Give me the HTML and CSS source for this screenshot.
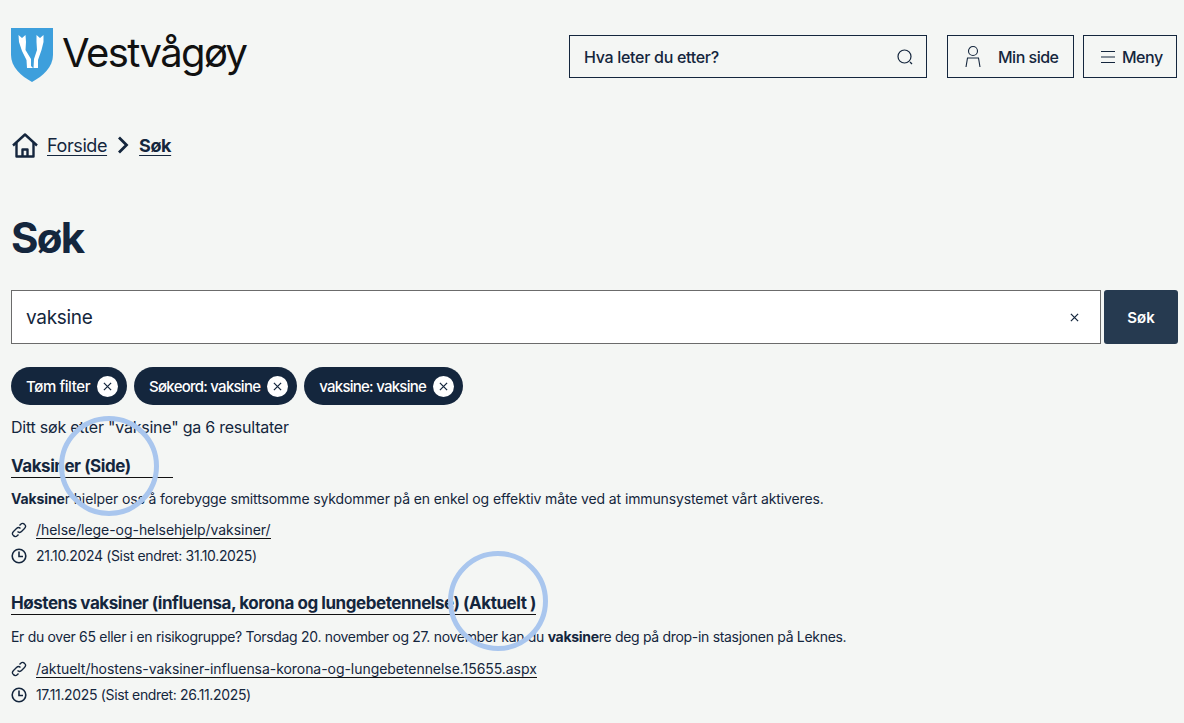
FILE: index.html
```html
<!DOCTYPE html>
<html lang="no">
<head>
  <meta charset="UTF-8">
  <meta name="viewport" content="width=device-width, initial-scale=1.0">
  <title>Søk - Vestvågøy</title>
  <link rel="stylesheet" href="styles.css">
</head>
<body>
  <header class="site-header">
    <a class="logo" href="#">
      <svg class="logo-shield" viewBox="0 0 42 54" width="42" height="54">
        <path d="M0 0H42V27C42 39 32 48 21 54C10 48 0 39 0 27Z" fill="#3d9fdc"/>
        <path d="M7.500 7L11 10L14.500 7L15 14L14.500 22L20 31L20 38L22 40L16 40L15.500 32L11 23L8 14Z" fill="#fff"/>
        <path d="M25.500 7L29 10L32.500 7L32.500 14L30.500 22L27 32L27 40L22.500 40L23 31L26 22L25.500 14Z" fill="#fff"/>
      </svg>
      <span class="logo-text">Vestvågøy</span>
    </a>
    <div class="header-tools">
      <div class="header-search">
        <span>Hva leter du etter?</span>
        <svg viewBox="0 0 18 18" width="18" height="18" fill="none" stroke="#14263d" stroke-width="1.2">
          <circle cx="8.5" cy="8.5" r="6.5"/>
          <path d="M14 14L16 16"/>
        </svg>
      </div>
      <button class="header-btn btn-minside">
        <svg viewBox="0 0 18 24" width="18" height="24" fill="none" stroke="#14263d" stroke-width="1.1">
          <circle cx="9" cy="6" r="4.5"/>
          <path d="M2 22L3.5 13H14.5L16 22"/>
        </svg>
        Min side
      </button>
      <button class="header-btn btn-meny">
        <svg viewBox="0 0 14 14" width="14" height="14" fill="none" stroke="#14263d" stroke-width="1.2">
          <path d="M0 1.5H14M0 7H14M0 12.500H14"/>
        </svg>
        Meny
      </button>
    </div>
  </header>

  <nav class="breadcrumb">
    <svg viewBox="0 0 26 25" width="26" height="25" fill="none" stroke="#14263d" stroke-width="2.4" stroke-linejoin="round">
      <path d="M1 12.500L13 1.500L25 12.500"/>
      <path d="M4.500 10V23.500H21.500V10"/>
      <path d="M10.500 23.500V16.500H15.500V23.500"/>
    </svg>
    <a href="#">Forside</a>
    <svg class="crumb-arrow" viewBox="0 0 12 18" width="12" height="18" fill="none" stroke="#14263d" stroke-width="2.800">
      <path d="M2 1.500L9.500 9L2 16.500"/>
    </svg>
    <a class="crumb-current" href="#">Søk</a>
  </nav>

  <main>
    <h1>Søk</h1>

    <form class="search-row">
      <div class="search-field">
        <span>vaksine</span>
        <svg viewBox="0 0 10 10" width="9" height="9" stroke="#14263d" stroke-width="1.4">
          <path d="M1 1L9 9M9 1L1 9"/>
        </svg>
      </div>
      <button class="search-btn" type="button">Søk</button>
    </form>

    <div class="filters">
      <span class="chip">Tøm filter <i class="chip-x"><svg viewBox="0 0 10 10" width="9" height="9" stroke="#14263d" stroke-width="1.4"><path d="M1 1L9 9M9 1L1 9"/></svg></i></span>
      <span class="chip chip-tight">Søkeord: vaksine <i class="chip-x"><svg viewBox="0 0 10 10" width="9" height="9" stroke="#14263d" stroke-width="1.4"><path d="M1 1L9 9M9 1L1 9"/></svg></i></span>
      <span class="chip chip-tight">vaksine: vaksine <i class="chip-x"><svg viewBox="0 0 10 10" width="9" height="9" stroke="#14263d" stroke-width="1.4"><path d="M1 1L9 9M9 1L1 9"/></svg></i></span>
    </div>

    <p class="result-count">Ditt søk etter "vaksine" ga 6 resultater</p>

    <article class="result first">
      <h2><a class="title-wide" href="#">Vaksiner (Side)</a></h2>
      <p class="excerpt"><b>Vaksine</b>r hjelper oss å forebygge smittsomme sykdommer på en enkel og effektiv måte ved at immunsystemet vårt aktiveres.</p>
      <div class="meta">
        <svg viewBox="0 0 16 16" width="16" height="16" fill="none" stroke="#14263d" stroke-width="1.4"><path d="M6.500 9.500C8 11 9.500 10.500 10.500 9.500L13.500 6.500C15 5 15 3.500 13.500 2.500C12.500 1 11 1 9.500 2.500L8.500 3.500"/><path d="M9.500 6.500C8 5 6.500 5.500 5.500 6.500L2.500 9.500C1 11 1 12.500 2.500 13.500C3.500 15 5 15 6.500 13.500L7.500 12.500"/></svg>
        <a href="#">/helse/lege-og-helsehjelp/vaksiner/</a>
      </div>
      <div class="meta meta-date">
        <svg viewBox="0 0 16 16" width="16" height="16" fill="none" stroke="#14263d" stroke-width="1.6"><circle cx="8" cy="8" r="6.800"/><path d="M8 3.500V8.500H12"/></svg>
        <span>21.10.2024 (Sist endret: 31.10.2025)</span>
      </div>
    </article>

    <article class="result">
      <h2><a href="#">Høstens vaksiner (influensa, korona og lungebetennelse) (Aktuelt )</a></h2>
      <p class="excerpt">Er du over 65 eller i en risikogruppe? Torsdag 20. november og 27. november kan du <b>vaksine</b>re deg på drop-in stasjonen på Leknes.</p>
      <div class="meta">
        <svg viewBox="0 0 16 16" width="16" height="16" fill="none" stroke="#14263d" stroke-width="1.4"><path d="M6.500 9.500C8 11 9.500 10.500 10.500 9.500L13.500 6.500C15 5 15 3.500 13.500 2.500C12.500 1 11 1 9.500 2.500L8.500 3.500"/><path d="M9.500 6.500C8 5 6.500 5.500 5.500 6.500L2.500 9.500C1 11 1 12.500 2.500 13.500C3.500 15 5 15 6.500 13.500L7.500 12.500"/></svg>
        <a href="#">/aktuelt/hostens-vaksiner-influensa-korona-og-lungebetennelse.15655.aspx</a>
      </div>
      <div class="meta meta-date">
        <svg viewBox="0 0 16 16" width="16" height="16" fill="none" stroke="#14263d" stroke-width="1.6"><circle cx="8" cy="8" r="6.800"/><path d="M8 3.500V8.500H12"/></svg>
        <span>17.11.2025 (Sist endret: 26.11.2025)</span>
      </div>
    </article>
  </main>

  <div class="ring ring-one"></div>
  <div class="ring ring-two"></div>
</body>
</html>
```

FILE: styles.css
```css
html {
  height: 100%;
  overflow: hidden;
}
body {
  margin: 0;
  height: 723px;
  overflow: hidden;
  position: relative;
  background-color: #f4f6f4;
  color: #14263d;
  font-family: 'Inter', 'Liberation Sans', sans-serif;
}
a {
  color: inherit;
}
button {
  font-family: inherit;
  color: inherit;
}
/* Header */
.site-header {
  display: flex;
  justify-content: space-between;
  align-items: flex-start;
  padding: 28px 7px 0 11px;
}
.logo {
  display: flex;
  align-items: center;
  gap: 9px;
  color: #111;
  text-decoration: none;
}
.logo-shield {
  display: block;
}
.logo-text {
  font-size: 40px;
  line-height: 50px;
  letter-spacing: -1.6px;
  padding-bottom: 4px;
}
.header-tools {
  display: flex;
  margin-top: 7px;
}
.header-search {
  width: 358px;
  height: 43px;
  box-sizing: border-box;
  border: 1px solid #14263d;
  display: flex;
  align-items: center;
  justify-content: space-between;
  padding: 0 12px 0 14px;
  font-size: 16px;
  font-weight: 500;
  letter-spacing: -0.3px;
}
.header-btn {
  height: 43px;
  box-sizing: border-box;
  border: 1px solid #14263d;
  background: transparent;
  display: flex;
  align-items: center;
  font-size: 16px;
  font-weight: 500;
  letter-spacing: -0.5px;
  padding: 0;
}
.btn-minside {
  width: 127px;
  margin-left: 20px;
  padding-left: 16px;
  gap: 16px;
}
.btn-meny {
  width: 94px;
  margin-left: 9px;
  padding-left: 17px;
  gap: 7px;
}
/* Breadcrumb */
.breadcrumb {
  display: flex;
  align-items: center;
  margin-top: 48px;
  padding-left: 12px;
  height: 30px;
  font-size: 18px;
  letter-spacing: -0.4px;
}
.breadcrumb a {
  margin-left: 9px;
  text-underline-offset: 3px;
}
.crumb-arrow {
  margin-left: 10px;
}
.breadcrumb .crumb-current {
  margin-left: 10px;
  font-weight: 700;
}
/* Main */
main {
  padding: 0 6px 0 11px;
}
h1 {
  margin: 51px 0 0;
  font-size: 42px;
  line-height: 54px;
  font-weight: 700;
  letter-spacing: -1.7px;
}
.search-row {
  display: flex;
  margin-top: 25px;
  gap: 3px;
}
.search-field {
  flex: 1;
  height: 54px;
  box-sizing: border-box;
  border: 1px solid #6b6b6b;
  background: #fff;
  display: flex;
  align-items: center;
  justify-content: space-between;
  padding: 0 21px 0 14px;
  font-size: 19px;
  letter-spacing: -0.3px;
}
.search-btn {
  width: 74px;
  height: 54px;
  border: none;
  border-radius: 3px;
  background-color: #263a50;
  color: #fff;
  font-size: 15px;
  font-weight: 600;
}
.filters {
  display: flex;
  gap: 7px;
  margin-top: 23px;
}
.chip {
  display: flex;
  align-items: center;
  gap: 7px;
  height: 38px;
  padding: 0 9px 0 15px;
  border-radius: 19px;
  background-color: #14263d;
  color: #fff;
  font-size: 15px;
  font-weight: 500;
  letter-spacing: -0.4px;
}
.chip-tight {
  letter-spacing: -0.75px;
}
.chip-x {
  width: 21px;
  height: 21px;
  border-radius: 50%;
  background: #fff;
  display: flex;
  align-items: center;
  justify-content: center;
}
.result-count {
  margin: 11px 0 0;
  font-size: 16px;
  line-height: 22px;
  letter-spacing: -0.23px;
}
.result {
  margin-top: 24px;
}
.result.first {
  margin-top: 17px;
}
.result h2 {
  margin: 0;
  font-size: 17px;
  line-height: 22px;
  font-weight: 700;
  letter-spacing: -0.45px;
}
.result h2 a {
  text-decoration: none;
  border-bottom: 1px solid #111;
  display: inline-block;
}
.title-wide {
  min-width: 162px;
}
.excerpt {
  margin: 11px 0 8px;
  font-size: 14px;
  line-height: 20px;
  letter-spacing: -0.12px;
}
.result + .result .excerpt {
  margin: 12px 0 9px;
  letter-spacing: -0.31px;
}
.meta {
  display: flex;
  align-items: center;
  gap: 9px;
  height: 25px;
  font-size: 14px;
  letter-spacing: -0.05px;
}
.meta-date {
  margin-top: 1px;
  letter-spacing: -0.34px;
}
.meta a {
  text-decoration: none;
  border-bottom: 1px solid #111;
}
/* Rings */
.ring {
  position: absolute;
  width: 100px;
  height: 100px;
  box-sizing: border-box;
  border: 5px solid #a9c6ee;
  border-radius: 50%;
}
.ring-one {
  left: 59px;
  top: 416px;
}
.ring-two {
  left: 448px;
  top: 551px;
}
```
